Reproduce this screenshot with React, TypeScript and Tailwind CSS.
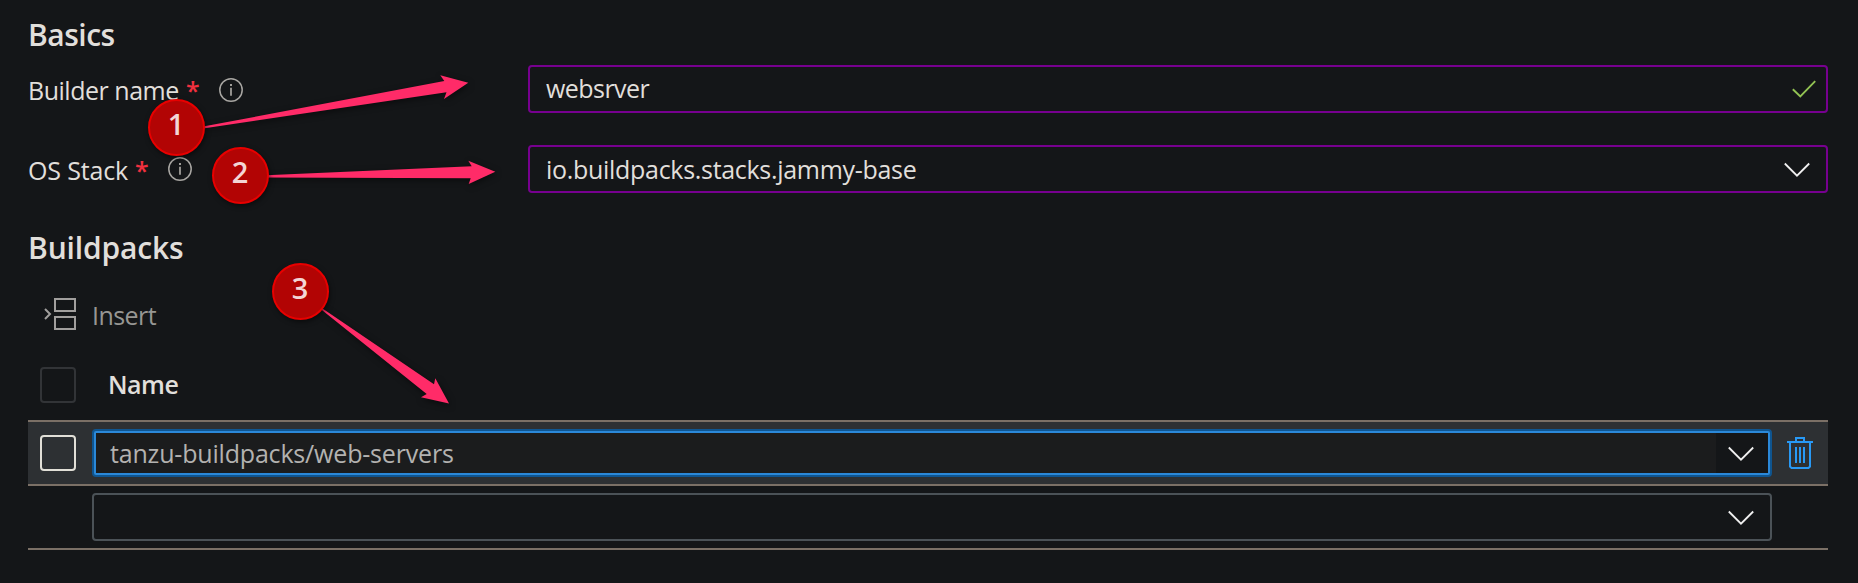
import type { ReactNode } from "react";

function InfoIcon() {
  return (
    <svg className="h-6 w-6 shrink-0" viewBox="0 0 24 24" fill="none" stroke="#a8a6a2">
      <circle cx="12" cy="12" r="11.2" strokeWidth="1.5" />
      <path d="M12 9.7v8.1" strokeWidth="1.7" />
      <path d="M12 6v2" strokeWidth="1.9" />
    </svg>
  );
}

function ChevronDown() {
  return (
    <svg className="h-4 w-[26px] shrink-0" viewBox="0 0 26 16" fill="none" stroke="#f0f0f0" strokeWidth="1.8">
      <path d="M.8 1.5 13 13.7 25.2 1.5" />
    </svg>
  );
}

function CheckIcon() {
  return (
    <svg className="h-[18px] w-6 shrink-0" viewBox="0 0 24 18" fill="none" stroke="#92c353" strokeWidth="1.9">
      <path d="m.8 9.2 7.5 7.2L23.2 1.2" />
    </svg>
  );
}

function InsertIcon() {
  return (
    <svg className="h-8 w-8 shrink-0" viewBox="0 0 32 32" fill="none" stroke="#a19f9d" strokeWidth="2">
      <path d="M11 1h20v12H11zM11 19h20v12H11zM1 11l5 5-5 5" />
    </svg>
  );
}

function TrashIcon() {
  return (
    <svg className="h-8 w-[26px] shrink-0" viewBox="0 0 26 32" fill="none" stroke="#2899f5" strokeWidth="2">
      <path d="M0 5h26M9 5V1h8v4M9 10v16M13 10v16M17 10v16" />
      <path d="M3 5v24.500L4.500 31h17l1.500-1.500V5" />
    </svg>
  );
}

function Field({ label, labelClass, iconClass, children }: { label: string; labelClass: string; iconClass: string; children: ReactNode }) {
  return (
    <div className="flex h-12">
      <div className="flex w-[500px] items-start pt-2">
        <span className={labelClass}>{label}</span>
        <span className="w-3.5 font-semibold text-[#f1303f]">*</span>
        <span className={iconClass}>
          <InfoIcon />
        </span>
      </div>
      {children}
    </div>
  );
}

function Badge({ n, place }: { n: number; place: string }) {
  return (
    <div
      className={`absolute flex h-[57px] w-[57px] justify-center rounded-full border-2 border-[#e80000] bg-[#b20404] pt-[3px] text-[29px] font-semibold leading-[39px] text-[#f3d5d5] shadow-[1px_2px_5px_rgba(0,0,0,0.5)] ${place}`}
    >
      {n}
    </div>
  );
}

export default function App() {
  return (
    <main className="relative h-[583px] w-[1858px] overflow-hidden whitespace-nowrap bg-[#141618] pl-7 pr-[30px] pt-3.5 font-['Open_Sans',sans-serif] text-[25px] leading-[34px] text-[#e1dfdb]">
      <h2 className="h-[51px] text-[30px] font-semibold leading-[41px] tracking-[-0.5px]">Basics</h2>

      <div className="flex flex-col gap-8">
        <Field label="Builder name" labelClass="w-[158px] tracking-[-0.48px]" iconClass="ml-[19px] mt-[5px]">
          <div className="flex flex-1 justify-between rounded-[4px] border-2 border-[#77008f] pl-4 pr-2.5 pt-1">
            <span className="tracking-[-0.55px]">websrver</span>
            <span className="mt-[9px]">
              <CheckIcon />
            </span>
          </div>
        </Field>
        <Field label="OS Stack" labelClass="w-[107px] tracking-[-0.15px]" iconClass="ml-[19px] mt-1">
          <div className="flex flex-1 justify-between rounded-[4px] border-2 border-[#77008f] pl-4 pr-4 pt-[5px]">
            <span className="tracking-[-0.3px]">io.buildpacks.stacks.jammy-base</span>
            <span className="mt-[10px]">
              <ChevronDown />
            </span>
          </div>
        </Field>
      </div>

      <h2 className="mt-[34px] h-[71px] text-[30px] font-semibold leading-[41px] tracking-[-0.15px]">Buildpacks</h2>

      <div className="flex h-[69px] gap-4 pl-4 text-[#979693]">
        <InsertIcon />
        <span className="tracking-[-0.55px]">Insert</span>
      </div>

      <div className="flex h-[53px] gap-8 pl-3">
        <span className="h-9 w-9 rounded-[4px] border-2 border-[#323437]" />
        <span className="font-semibold tracking-[-0.5px]">Name</span>
      </div>

      <div className="flex h-[66px] items-start border-y-2 border-[#7b7066] bg-[#2d3033] pl-3">
        <span className="mt-[13px] h-9 w-9 rounded-[4px] border-2 border-[#e1dfd7]" />
        <div className="ml-4 mt-[7px] h-12 w-[1680px] rounded-[4px] border-2 border-[#0f5590] bg-[#2b88d8] p-0.5">
          <div className="flex h-10 justify-between bg-[#1b1c1d] pl-3.5">
            <span className="mt-[3px] tracking-[-0.18px] text-[#b3b2b0]">tanzu-buildpacks/web-servers</span>
            <span className="flex w-[52px] bg-[#141618] pl-3 pt-[13px]">
              <ChevronDown />
            </span>
          </div>
        </div>
        <span className="ml-[15px] mt-[15px]">
          <TrashIcon />
        </span>
      </div>

      <div className="h-16 border-b-2 border-[#7b7066] pl-16 pt-[7px]">
        <div className="flex h-12 w-[1680px] justify-end rounded-[4px] border-2 border-[#4b5257] pr-4 pt-[15px]">
          <ChevronDown />
        </div>
      </div>

      <svg
        className="pointer-events-none absolute left-0 top-0 h-[583px] w-[1858px] drop-shadow-[1px_2px_3px_rgba(0,0,0,0.5)]"
        viewBox="0 0 1858 583"
        fill="#ff2b68"
      >
        <path d="M203 126.600 444.300 81 440.300 75.300 468.300 82.700 444 99 446.500 92.300 203 128.500z" />
        <path d="M266 175.300 471.700 166.300 468.300 160.700 495.300 171.700 468.700 184 470.700 178.300 266 177.500z" />
        <path d="M321 307.500 434 384.300 435.300 378.300 449 403.500 421 397.300 426.700 394 320 308.500z" />
      </svg>
      <Badge n={1} place="left-[147.500px] top-[98.500px]" />
      <Badge n={2} place="left-[211.500px] top-[146.500px]" />
      <Badge n={3} place="left-[271.500px] top-[262.500px]" />
    </main>
  );
}
